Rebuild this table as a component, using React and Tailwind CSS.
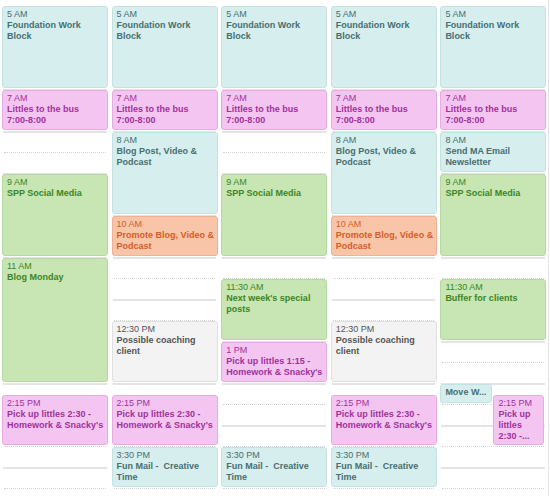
import React from "react";

const HOUR = 42;
const TOP = 6;

const styles = {
  teal: "bg-[#d6eeee] border-[#c5e2e2] text-[#476f71]",
  pink: "bg-[#f4c5f1] border-[#e6ace2] text-[#a1329a]",
  green: "bg-[#c8e5b4] border-[#b5d9a0] text-[#3b861f]",
  orange: "bg-[#f8c5a9] border-[#f0b293] text-[#d55d27]",
  gray: "bg-[#f3f3f3] border-[#e0e0e0] text-[#555555]",
};

const foundation = { start: 5, end: 7, color: "teal", time: "5 AM", lines: ["Foundation Work", "Block"] };
const bus = { start: 7, end: 8, color: "pink", time: "7 AM", lines: ["Littles to the bus", "7:00-8:00"] };
const blogPost = { start: 8, end: 10, color: "teal", time: "8 AM", lines: ["Blog Post, Video &", "Podcast"] };
const promote = { start: 10, end: 11, color: "orange", time: "10 AM", lines: ["Promote Blog, Video &", "Podcast"] };
const coaching = { start: 12.5, end: 14, color: "gray", time: "12:30 PM", lines: ["Possible coaching", "client"] };
const pickup = { start: 14.25, end: 15.5, color: "pink", time: "2:15 PM", lines: ["Pick up littles 2:30 -", "Homework & Snacky's"] };
const funMail = { start: 15.5, end: 16.5, color: "teal", time: "3:30 PM", lines: ["Fun Mail -  Creative", "Time"] };
const spp = { start: 9, end: 11, color: "green", time: "9 AM", lines: ["SPP Social Media"] };

const columns = [
  [foundation, bus, spp, { start: 11, end: 14, color: "green", time: "11 AM", lines: ["Blog Monday"] }, pickup],
  [foundation, bus, blogPost, promote, coaching, pickup, funMail],
  [
    foundation,
    bus,
    spp,
    { start: 11.5, end: 13, color: "green", time: "11:30 AM", lines: ["Next week's special", "posts"] },
    { start: 13, end: 14, color: "pink", time: "1 PM", lines: ["Pick up littles 1:15 -", "Homework & Snacky's"] },
    funMail,
  ],
  [foundation, bus, blogPost, promote, coaching, pickup, funMail],
  [
    foundation,
    bus,
    { start: 8, end: 9, color: "teal", time: "8 AM", lines: ["Send MA Email", "Newsletter"] },
    spp,
    { start: 11.5, end: 13, color: "green", time: "11:30 AM", lines: ["Buffer for clients"] },
    { start: 14, end: 14.5, color: "teal", lines: ["Move W..."], left: 2, width: 52 },
    { start: 14.25, end: 15.5, color: "pink", time: "2:15 PM", lines: ["Pick up", "littles", "2:30 -..."], left: 55, width: 51 },
  ],
];

const Event = ({ ev }) => {
  const top = TOP + (ev.start - 5) * HOUR;
  const height = (ev.end - ev.start) * HOUR - 2;
  return (
    <div
      className={`absolute rounded-[3px] border overflow-hidden px-[4px] pt-[2px] text-[9px] leading-[11px] ${styles[ev.color]}`}
      style={{ top, height, left: ev.left ?? 2, width: ev.width ?? 106 }}
    >
      {ev.time && <div className="whitespace-nowrap">{ev.time}</div>}
      {ev.lines.map((l) => (
        <div key={l} className="font-bold whitespace-pre">
          {l}
        </div>
      ))}
    </div>
  );
};

const GridLines = () => (
  <div className="flex flex-col pt-[6px]">
    {Array.from({ length: 23 }).map((_, i) =>
      i % 2 === 0 ? (
        <div key={i} className="h-[21px] mx-[4px] border-b border-dotted border-[#d4d4d4]" />
      ) : (
        <div key={i} className="h-[21px] mx-[3px] relative">
          <div className="absolute left-0 right-0 bottom-[-1px] h-[2px] bg-[#e4e4e4]" />
        </div>
      )
    )}
  </div>
);

export default function App() {
  return (
    <div className="w-[550px] h-[496px] overflow-hidden bg-white" style={{ fontFamily: '"Liberation Sans", Arial, sans-serif' }}>
      <div className="flex w-[549px] h-[496px] border-r border-[#e4e4e4]">
        {columns.map((events, i) => (
          <div key={i} className="relative flex-1 h-full">
            <GridLines />
            {events.map((ev, j) => (
              <Event key={j} ev={ev} />
            ))}
          </div>
        ))}
      </div>
    </div>
  );
}
